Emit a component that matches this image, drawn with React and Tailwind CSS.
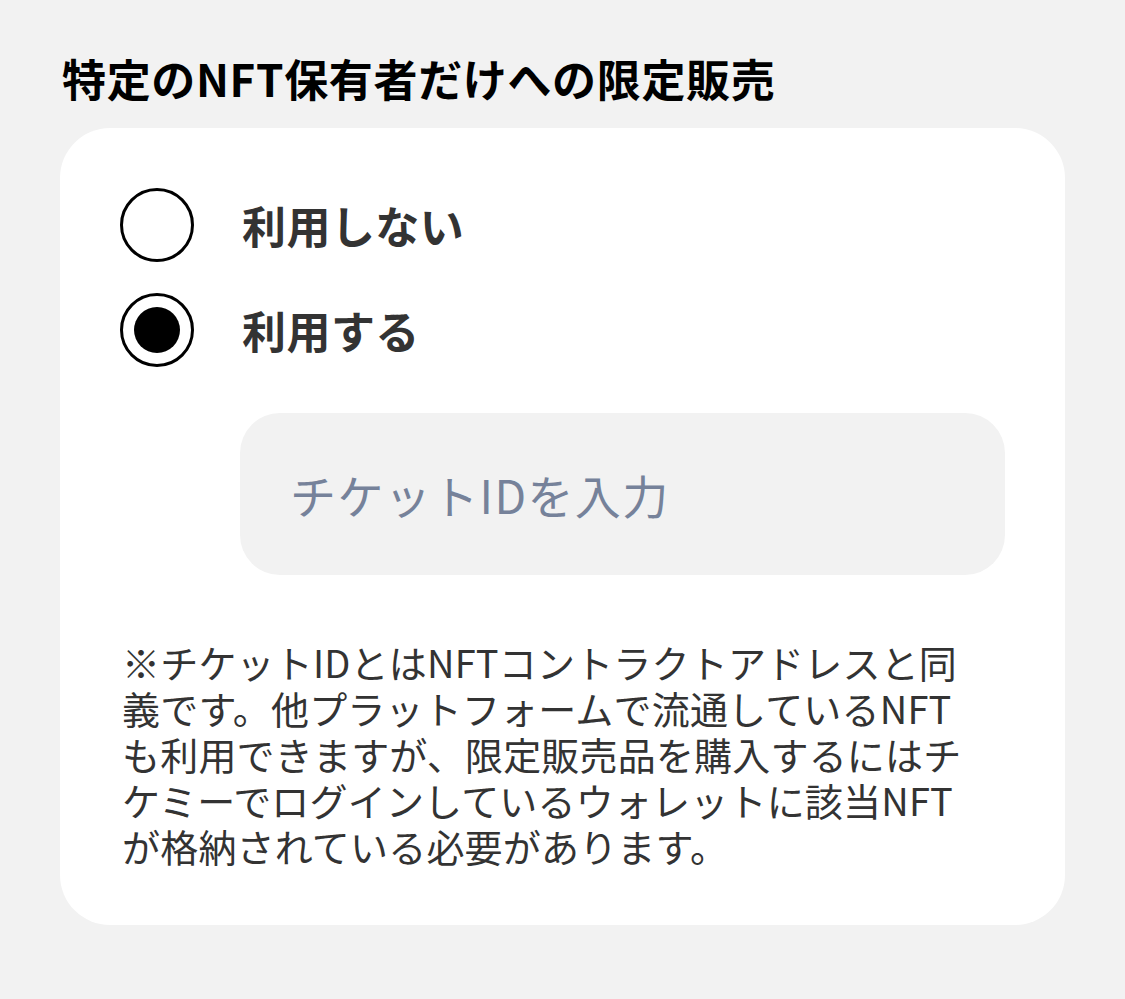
import { useState } from "react";

const FONT = "font-['Noto_Sans_CJK_JP','Noto_Sans',sans-serif]";

function Radio({ checked, label, onClick }) {
  return (
    <button type="button" onClick={onClick} className="flex items-center gap-[48px] text-left">
      <span className="flex h-[74px] w-[74px] shrink-0 items-center justify-center rounded-full border-[3px] border-black bg-white">
        {checked && <span className="h-[46px] w-[46px] rounded-full bg-black" />}
      </span>
      <span className="text-[44px] font-bold leading-none tracking-[0.01em] text-[#333]">{label}</span>
    </button>
  );
}

export default function App() {
  const [use, setUse] = useState(true);

  return (
    <div className={`min-h-[999px] w-[1125px] bg-[#f2f2f2] ${FONT}`}>
      <div className="px-[60px] pt-[50px]">
        <h2 className="pl-[2px] text-[44px] font-bold leading-[56px] tracking-[0.015em] text-black">
          特定のNFT保有者だけへの限定販売
        </h2>

        <div className="mt-[22px] rounded-[50px] bg-white pb-[56px] pl-[60px] pr-[60px] pt-[60px]">
          <div className="flex flex-col gap-[31px]">
            <Radio label="利用しない" checked={!use} onClick={() => setUse(false)} />
            <Radio label="利用する" checked={use} onClick={() => setUse(true)} />
          </div>

          <div className="ml-[120px] mt-[46px] flex h-[162px] items-center rounded-[40px] bg-[#f2f2f2] pl-[50px] pr-[52px]">
            <input
              className="w-full bg-transparent text-[46px] tracking-[0.03em] text-[#333] outline-none placeholder:text-[#76829a]"
              placeholder="チケットIDを入力"
            />
          </div>

          <p className="mt-[64px] pl-[2px] text-[38px] leading-[46px] tracking-[0.005em] text-[#333]">
            ※チケットIDとはNFTコントラクトアドレスと同
            <br />
            義です。他プラットフォームで流通しているNFT
            <br />
            も利用できますが、限定販売品を購入するにはチ
            <br />
            ケミーでログインしているウォレットに該当NFT
            <br />
            が格納されている必要があります。
          </p>
        </div>
      </div>
    </div>
  );
}
